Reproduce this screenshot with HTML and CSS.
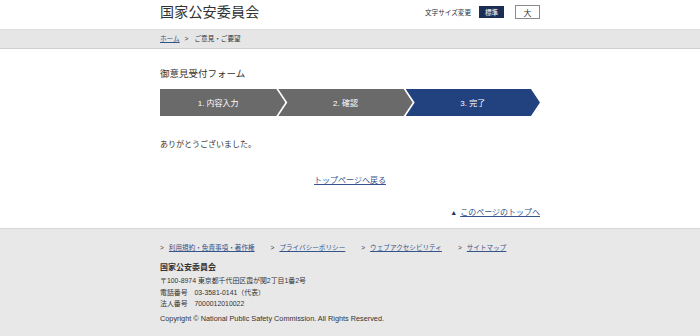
FILE: index.html
```html
<!DOCTYPE html>
<html lang="ja">
<head>
<meta charset="UTF-8">
<meta name="viewport" content="width=device-width, initial-scale=1.0">
<title>御意見受付フォーム | 国家公安委員会</title>
<link rel="stylesheet" href="styles.css">
</head>
<body>
<header class="site-header">
  <div class="inner header-row">
    <h1 class="site-title">国家公安委員会</h1>
    <div class="font-size">
      <span class="font-size-label">文字サイズ変更</span>
      <button class="size-btn size-normal">標準</button>
      <button class="size-btn size-large">大</button>
    </div>
  </div>
</header>

<nav class="breadcrumb">
  <div class="inner">
    <a href="#">ホーム</a><span class="sep">&gt;</span><span>ご意見・ご要望</span>
  </div>
</nav>

<main class="inner content">
  <h2 class="page-title">御意見受付フォーム</h2>
  <ol class="steps">
    <li class="step">1. 内容入力</li>
    <li class="step">2. 確認</li>
    <li class="step current">3. 完了</li>
  </ol>
  <p class="thanks">ありがとうございました。</p>
  <p class="back"><a href="#">トップページへ戻る</a></p>
  <p class="pagetop"><span class="tri">▲</span><a href="#">このページのトップへ</a></p>
</main>

<footer class="site-footer">
  <div class="inner">
    <ul class="footer-links">
      <li><a href="#">利用規約・免責事項・著作権</a></li>
      <li><a href="#">プライバシーポリシー</a></li>
      <li><a href="#">ウェブアクセシビリティ</a></li>
      <li><a href="#">サイトマップ</a></li>
    </ul>
    <p class="org">国家公安委員会</p>
    <address class="address">
      〒100-8974 東京都千代田区霞が関2丁目1番2号<br>
      電話番号　03-3581-0141（代表）<br>
      法人番号　7000012010022
    </address>
    <p class="copyright">Copyright © National Public Safety Commission. All Rights Reserved.</p>
  </div>
</footer>
</body>
</html>
```

FILE: styles.css
```css
body {
  margin: 0;
  background: #fff;
  color: #333;
  font-family: "Liberation Sans", "Noto Sans CJK JP", sans-serif;
}
a {
  color: #34548a;
}
.inner {
  width: 380px;
  margin: 0 auto;
}

/* header */
.site-header {
  height: 29px;
}
.header-row {
  display: flex;
  align-items: center;
  justify-content: space-between;
  padding-top: 3px;
}
.site-title {
  margin: 0;
  font-size: 14px;
  line-height: 18px;
  font-weight: normal;
  letter-spacing: 0.2px;
}
.font-size {
  display: flex;
  align-items: center;
}
.font-size-label {
  font-size: 6.6px;
}
.size-btn {
  font-family: inherit;
  padding: 0;
  width: 25px;
  cursor: pointer;
}
.size-normal {
  margin-left: 8px;
  height: 12px;
  border: 0;
  background: #1c2d55;
  color: #fff;
  font-size: 6.6px;
}
.size-large {
  margin-left: 11px;
  height: 14px;
  border: 1px solid #8a8a8a;
  background: #fff;
  color: #333;
  font-size: 8px;
}

/* breadcrumb */
.breadcrumb {
  background: #e6e6e6;
  border-top: 1px solid #dcdcdc;
  border-bottom: 1px solid #cfcfcf;
  height: 18px;
  font-size: 6.6px;
  line-height: 18px;
}
.breadcrumb .sep {
  margin: 0 6px 0 5px;
}

/* main */
.page-title {
  margin: 18px 0 0;
  font-size: 9.5px;
  line-height: 14px;
  font-weight: normal;
}
.steps {
  display: flex;
  list-style: none;
  margin: 8px 0 0;
  padding: 0;
  height: 27px;
}
.step {
  flex: 1;
  margin-left: -7px;
  padding: 0 9px;
  display: flex;
  align-items: center;
  justify-content: center;
  background: #6a6a6a;
  color: #fff;
  font-size: 8px;
  clip-path: polygon(0 0, calc(100% - 9px) 0, 100% 50%, calc(100% - 9px) 100%, 0 100%, 9px 50%);
}
.step:first-child {
  margin-left: 0;
  padding-left: 0;
  clip-path: polygon(0 0, calc(100% - 9px) 0, 100% 50%, calc(100% - 9px) 100%, 0 100%);
}
.step.current {
  background: #22417f;
}
.thanks {
  margin: 22px 0 0;
  font-size: 8px;
  line-height: 14px;
}
.back {
  margin: 22px 0 0;
  text-align: center;
  font-size: 8px;
  line-height: 14px;
}
.pagetop {
  margin: 18px 0 0;
  padding-bottom: 8px;
  text-align: right;
  font-size: 8px;
  line-height: 14px;
}
.pagetop .tri {
  color: #1f3565;
  font-size: 7px;
  margin-right: 3px;
}

/* footer */
.site-footer {
  background: #e8e8e8;
  border-top: 1px solid #d6d6d6;
  padding: 13px 0 20px;
}
.footer-links {
  display: flex;
  gap: 16px;
  list-style: none;
  margin: 0;
  padding: 0;
  font-size: 6.6px;
  line-height: 12px;
}
.footer-links li::before {
  content: ">";
  margin-right: 5px;
  color: #333;
}
.org {
  margin: 8px 0 0;
  font-size: 8px;
  line-height: 12px;
  font-weight: bold;
}
.address {
  margin-top: 1px;
  font-style: normal;
  font-size: 6.9px;
  line-height: 11.5px;
}
.copyright {
  margin: 3px 0 0;
  font-size: 7.3px;
  line-height: 12px;
}
```
